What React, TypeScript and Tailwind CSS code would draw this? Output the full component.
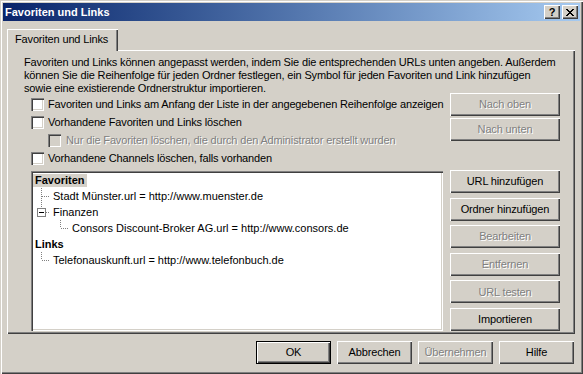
import React from "react";

const raised =
  "shadow-[inset_1px_1px_#ffffff,inset_-1px_-1px_#404040,inset_-2px_-2px_#808080]";
const sunken =
  "shadow-[inset_1px_1px_#808080,inset_2px_2px_#404040,inset_-1px_-1px_#ffffff,inset_-2px_-2px_#d4d0c8]";
const disabledText = "text-[#808080] [text-shadow:1px_1px_0_#ffffff]";

function Button({
  label,
  disabled,
  isDefault,
  className = "",
}: {
  label: string;
  disabled?: boolean;
  isDefault?: boolean;
  className?: string;
}) {
  if (isDefault) {
    return (
      <div className={`h-[23px] border border-black bg-[#d4d0c8] ${className}`}>
        <div className={`h-full flex items-center justify-center ${raised}`}>{label}</div>
      </div>
    );
  }
  return (
    <div
      className={`h-[23px] flex items-center justify-center bg-[#d4d0c8] ${raised} ${
        disabled ? disabledText : "text-black"
      } ${className}`}
    >
      {label}
    </div>
  );
}

function Checkbox({ label, disabled }: { label: string; disabled?: boolean }) {
  return (
    <div className="h-[18px] flex items-center gap-[4px] whitespace-nowrap">
      <span
        className={`w-[13px] h-[13px] shrink-0 ${sunken} ${disabled ? "bg-[#d4d0c8]" : "bg-white"}`}
      />
      <span className={disabled ? `ml-[1px] ${disabledText}` : "text-black"}>{label}</span>
    </div>
  );
}

const dot = { stroke: "#808080", strokeWidth: 1, strokeDasharray: "1 1" };

function TreeRow({ indent, label, bold, selected }: {
  indent: React.ReactNode;
  label: string;
  bold?: boolean;
  selected?: boolean;
}) {
  return (
    <div className="h-[16px] flex items-center whitespace-nowrap">
      {indent}
      <span
        className={`px-[2px] leading-[13px] ${bold ? "font-bold" : ""} ${
          selected ? "bg-[#d4d0c8]" : ""
        }`}
      >
        {label}
      </span>
    </div>
  );
}

export default function App() {
  return (
    <div className="w-[583px] h-[374px] bg-[#d4d0c8] p-[3px] flex flex-col text-[11px] tracking-[-0.15px] text-black font-['Liberation_Sans',Arial,sans-serif] shadow-[inset_1px_1px_#d4d0c8,inset_2px_2px_#ffffff,inset_-1px_-1px_#404040,inset_-2px_-2px_#808080]">
      {/* title bar */}
      <div className="h-[18px] flex items-center pl-[2px] pr-[2px] bg-linear-to-r from-[#0a246a] to-[#a6caf0]">
        <span className="flex-1 text-white font-bold tracking-normal">Favoriten und Links</span>
        <div className={`w-[16px] h-[14px] bg-[#d4d0c8] flex items-center justify-center font-bold text-[11px] leading-none ${raised}`}>
          ?
        </div>
        <div className={`ml-[2px] w-[16px] h-[14px] bg-[#d4d0c8] flex items-center justify-center ${raised}`}>
          <svg width="8" height="7" viewBox="0 0 8 7" shapeRendering="crispEdges">
            <path d="M0 0h2v1h-2zM6 0h2v1h-2zM1 1h2v1h-2zM5 1h2v1h-2zM2 2h4v1h-4zM3 3h2v1h-2zM2 4h4v1h-4zM1 5h2v1h-2zM5 5h2v1h-2zM0 6h2v1h-2zM6 6h2v1h-2z" fill="#000" />
          </svg>
        </div>
      </div>

      <div className="px-[4px] flex flex-col">
        {/* tab */}
        <div className="mt-[8px] flex">
          <div className="relative z-10 h-[22px] w-[111px] bg-[#d4d0c8] flex items-center pl-[8px] pb-[1px] whitespace-nowrap shadow-[inset_1px_1px_#ffffff,inset_-1px_0_#404040,inset_-2px_0_#808080]">
            Favoriten und Links
          </div>
        </div>

        {/* panel */}
        <div className={`-mt-[1px] w-[568px] h-[284px] flex flex-col ${raised}`}>
          <p className="ml-[17px] mt-[6px] leading-[13px] whitespace-nowrap">
            Favoriten und Links können angepasst werden, indem Sie die entsprechenden URLs unten angeben. Außerdem
            <br />
            können Sie die Reihenfolge für jeden Ordner festlegen, ein Symbol für jeden Favoriten und Link hinzufügen
            <br />
            sowie eine existierende Ordnerstruktur importieren.
          </p>

          <div className="ml-[24px] w-[529px] flex justify-between">
            <div className="flex flex-col">
              <Checkbox label="Favoriten und Links am Anfang der Liste in der angegebenen Reihenfolge anzeigen" />
              <Checkbox label="Vorhandene Favoriten und Links löschen" />
              <div className="ml-[17px]">
                <Checkbox label="Nur die Favoriten löschen, die durch den Administrator erstellt wurden" disabled />
              </div>
              <Checkbox label="Vorhandene Channels löschen, falls vorhanden" />
            </div>
            <div className="-mt-[2px] flex flex-col gap-[2px]">
              <Button label="Nach oben" disabled className="w-[110px]" />
              <Button label="Nach unten" disabled className="w-[110px]" />
            </div>
          </div>

          <div className="ml-[24px] mt-[4px] flex gap-[7px]">
            <div className={`w-[412px] h-[160px] bg-white p-[2px] tracking-normal ${sunken}`}>
              <div className="-mt-[1px] flex flex-col">
                <TreeRow indent={null} label="Favoriten" bold selected />
                <TreeRow
                  indent={
                    <svg width="18" height="16" className="shrink-0">
                      <line x1="8.5" y1="0" x2="8.5" y2="16" style={dot} />
                      <line x1="9" y1="8.5" x2="17" y2="8.5" style={dot} />
                    </svg>
                  }
                  label="Stadt Münster.url = http://www.muenster.de"
                />
                <TreeRow
                  indent={
                    <svg width="18" height="16" className="shrink-0" shapeRendering="crispEdges">
                      <line x1="8.5" y1="0" x2="8.5" y2="4" style={dot} />
                      <rect x="4.5" y="4.5" width="8" height="8" fill="#fff" stroke="#808080" />
                      <line x1="6" y1="8.5" x2="11" y2="8.5" stroke="#000" />
                      <line x1="13" y1="8.5" x2="17" y2="8.5" style={dot} />
                    </svg>
                  }
                  label="Finanzen"
                />
                <TreeRow
                  indent={
                    <svg width="37" height="16" className="shrink-0">
                      <line x1="27.5" y1="0" x2="27.5" y2="8" style={dot} />
                      <line x1="28" y1="8.5" x2="36" y2="8.5" style={dot} />
                    </svg>
                  }
                  label="Consors Discount-Broker AG.url = http://www.consors.de"
                />
                <TreeRow indent={null} label="Links" bold />
                <TreeRow
                  indent={
                    <svg width="18" height="16" className="shrink-0">
                      <line x1="8.5" y1="0" x2="8.5" y2="8" style={dot} />
                      <line x1="9" y1="8.5" x2="17" y2="8.5" style={dot} />
                    </svg>
                  }
                  label="Telefonauskunft.url = http://www.telefonbuch.de"
                />
              </div>
            </div>
            <div className="-mt-[1px] flex flex-col gap-[4.6px]">
              <Button label="URL hinzufügen" className="w-[110px]" />
              <Button label="Ordner hinzufügen" className="w-[110px]" />
              <Button label="Bearbeiten" disabled className="w-[110px]" />
              <Button label="Entfernen" disabled className="w-[110px]" />
              <Button label="URL testen" disabled className="w-[110px]" />
              <Button label="Importieren" className="w-[110px]" />
            </div>
          </div>
        </div>

        {/* bottom buttons */}
        <div className="mt-[7px] w-[568px] pr-[1px] flex justify-end gap-[6px]">
          <Button label="OK" isDefault className="w-[75px]" />
          <Button label="Abbrechen" className="w-[75px]" />
          <Button label="Übernehmen" disabled className="w-[75px]" />
          <Button label="Hilfe" className="w-[75px]" />
        </div>
      </div>
    </div>
  );
}
